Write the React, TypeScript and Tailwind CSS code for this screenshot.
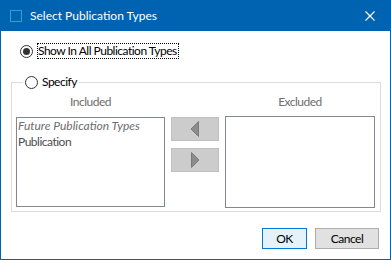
import { useState } from "react";

function Radio({ checked }: { checked: boolean }) {
  return (
    <span className="w-[13px] h-[13px] rounded-full border border-[#333333] bg-white flex items-center justify-center shrink-0">
      {checked && <span className="w-[7px] h-[7px] rounded-full bg-[#333333]" />}
    </span>
  );
}

function ArrowButton({ dir }: { dir: "left" | "right" }) {
  return (
    <button className="w-[48px] h-[24px] bg-[#cccccc] border border-[#bfbfbf] flex items-center justify-center">
      <svg width="10" height="16" viewBox="0 0 10 16">
        {dir === "left" ? (
          <polygon points="8.5,0.5 8.5,15.5 1,8" fill="#8c8c8c" stroke="#7a7a7a" strokeWidth="1" />
        ) : (
          <polygon points="1.5,0.5 1.5,15.5 9,8" fill="#8c8c8c" stroke="#7a7a7a" strokeWidth="1" />
        )}
      </svg>
    </button>
  );
}

export default function App() {
  const [modo, setModo] = useState<"all" | "specify">("all");

  return (
    <div
      className="w-[391px] h-[260px] border border-[#0063b1] bg-white flex flex-col text-[12px] text-black tracking-[-0.5px]"
      style={{ fontFamily: 'Lato, "Segoe UI", sans-serif' }}
    >
      {/* Barra de título */}
      <div className="h-[30px] bg-[#0063b1] flex items-center pl-[9px] pr-[15px] shrink-0">
        <span className="w-[12px] h-[12px] border-[1.5px] border-[#2ea8c9] mr-[8px]" />
        <span className="text-white text-[12px] flex-1 tracking-normal">Select Publication Types</span>
        <svg width="10" height="10" viewBox="0 0 10 10">
          <path d="M0.5 0.5 L9.5 9.5 M9.5 0.5 L0.5 9.5" stroke="white" strokeWidth="1.2" />
        </svg>
      </div>

      {/* Conteúdo */}
      <div className="flex-1 flex flex-col">
        <div className="pl-[19px] pt-[12px] flex">
          <label className="flex items-center gap-[4px] cursor-default" onClick={() => setModo("all")}>
            <Radio checked={modo === "all"} />
            <span className="border border-dotted border-black leading-[14px] h-[16px] pr-[1px]">
              Show In All Publication Types
            </span>
          </label>
        </div>

        <fieldset className="mx-[10px] mt-[15px] border border-[#dcdcdc] pl-[4px] pr-[5px] pb-[3px]">
          <legend className="ml-[7px] px-[2px]">
            <label className="flex items-center gap-[4px] cursor-default" onClick={() => setModo("specify")}>
              <Radio checked={modo === "specify"} />
              <span className="leading-[16px]">Specify</span>
            </label>
          </legend>

          <div className="flex gap-[6px] mt-[4px]">
            <div className="flex flex-col w-[149px]">
              <span className="text-center text-[#6d6d6d] leading-[16px] mb-[7px]">Included</span>
              <div className="h-[90px] border border-[#828790] bg-white pl-[1px] leading-[16px]">
                <div className="italic text-[#6d6d6d] tracking-normal">Future Publication Types</div>
                <div className="text-[#4d4d4d]">Publication</div>
              </div>
            </div>

            <div className="flex flex-col gap-[7px] pt-[23px]">
              <ArrowButton dir="left" />
              <ArrowButton dir="right" />
            </div>

            <div className="flex flex-col w-[150px] ml-auto">
              <span className="text-center text-[#6d6d6d] leading-[16px] mb-[6px]">Excluded</span>
              <div className="h-[92px] border border-[#828790] bg-white" />
            </div>
          </div>
        </fieldset>

        <div className="flex justify-end gap-[8px] pr-[11px] mt-[16px]">
          <button className="w-[45px] h-[21px] border border-[#0078d7] bg-[#e5f1fb] text-[12px] leading-[18px]">
            OK
          </button>
          <button className="w-[64px] h-[21px] border border-[#adadad] bg-[#e1e1e1] text-[12px] leading-[18px]">
            Cancel
          </button>
        </div>
      </div>
    </div>
  );
}
